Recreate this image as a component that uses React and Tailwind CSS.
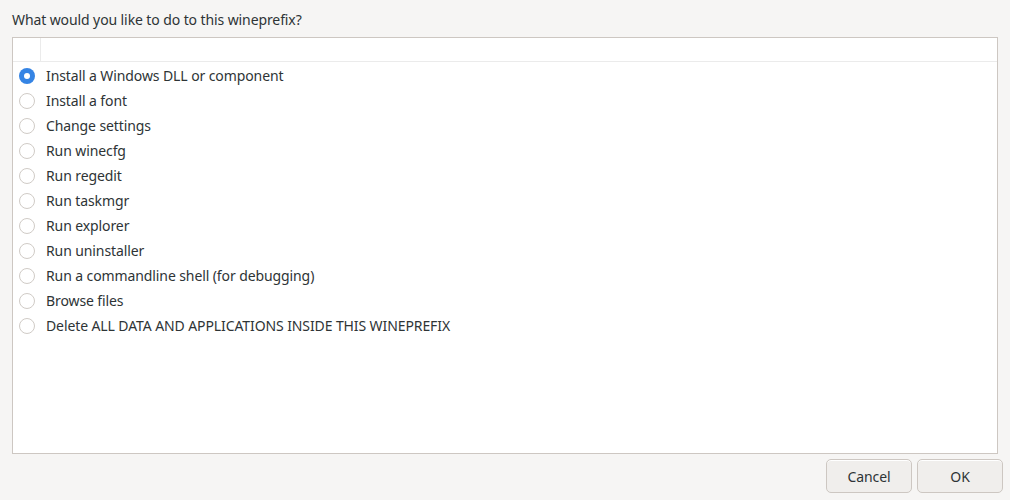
const options = [
  'Install a Windows DLL or component',
  'Install a font',
  'Change settings',
  'Run winecfg',
  'Run regedit',
  'Run taskmgr',
  'Run explorer',
  'Run uninstaller',
  'Run a commandline shell (for debugging)',
  'Browse files',
  'Delete ALL DATA AND APPLICATIONS INSIDE THIS WINEPREFIX',
];

const Radio = ({ checked }) =>
  checked ? (
    <span className="flex size-[16px] items-center justify-center rounded-full bg-[#3584e4]">
      <span className="size-[6px] rounded-full bg-white" />
    </span>
  ) : (
    <span className="size-[16px] rounded-full border border-[#d0cbc6] bg-white" />
  );

export default function App() {
  return (
    <div
      className="flex h-[500px] w-[1010px] flex-col bg-[#f6f5f4] text-[14px] tracking-[-0.1px] text-[#2e3436]"
      style={{ fontFamily: '"Noto Sans", "DejaVu Sans", sans-serif' }}
    >
      {/* Prompt */}
      <div className="px-3 pt-[10px] pb-[7px] leading-5 text-[#2e3436]">
        What would you like to do to this wineprefix?
      </div>

      {/* List */}
      <div className="ml-3 mr-3 flex h-[417px] flex-col border border-[#cdc7c2] bg-white">
        <div className="flex h-6 border-b border-[#ebebeb]">
          <div className="w-[28px] border-r border-[#ebebeb]" />
          <div className="flex-1" />
        </div>
        <div className="pt-[1px]">
          {options.map((label, i) => (
            <div key={label} className="flex h-[25px] items-center">
              <div className="flex w-[27px] justify-center">
                <Radio checked={i === 0} />
              </div>
              <span className="pl-[6px] leading-5">{label}</span>
            </div>
          ))}
        </div>
      </div>

      {/* Buttons */}
      <div className="mt-[5px] flex justify-end gap-[5px] pr-[7px]">
        <button className="h-[34px] w-[86px] rounded-[5px] border border-[#cdc7c2] bg-[#f0eeec] text-[#2e3436] shadow-[inset_0_1px_0_#fff]">
          Cancel
        </button>
        <button className="h-[34px] w-[86px] rounded-[5px] border border-[#cdc7c2] bg-[#f0eeec] text-[#2e3436] shadow-[inset_0_1px_0_#fff]">
          OK
        </button>
      </div>
    </div>
  );
}
